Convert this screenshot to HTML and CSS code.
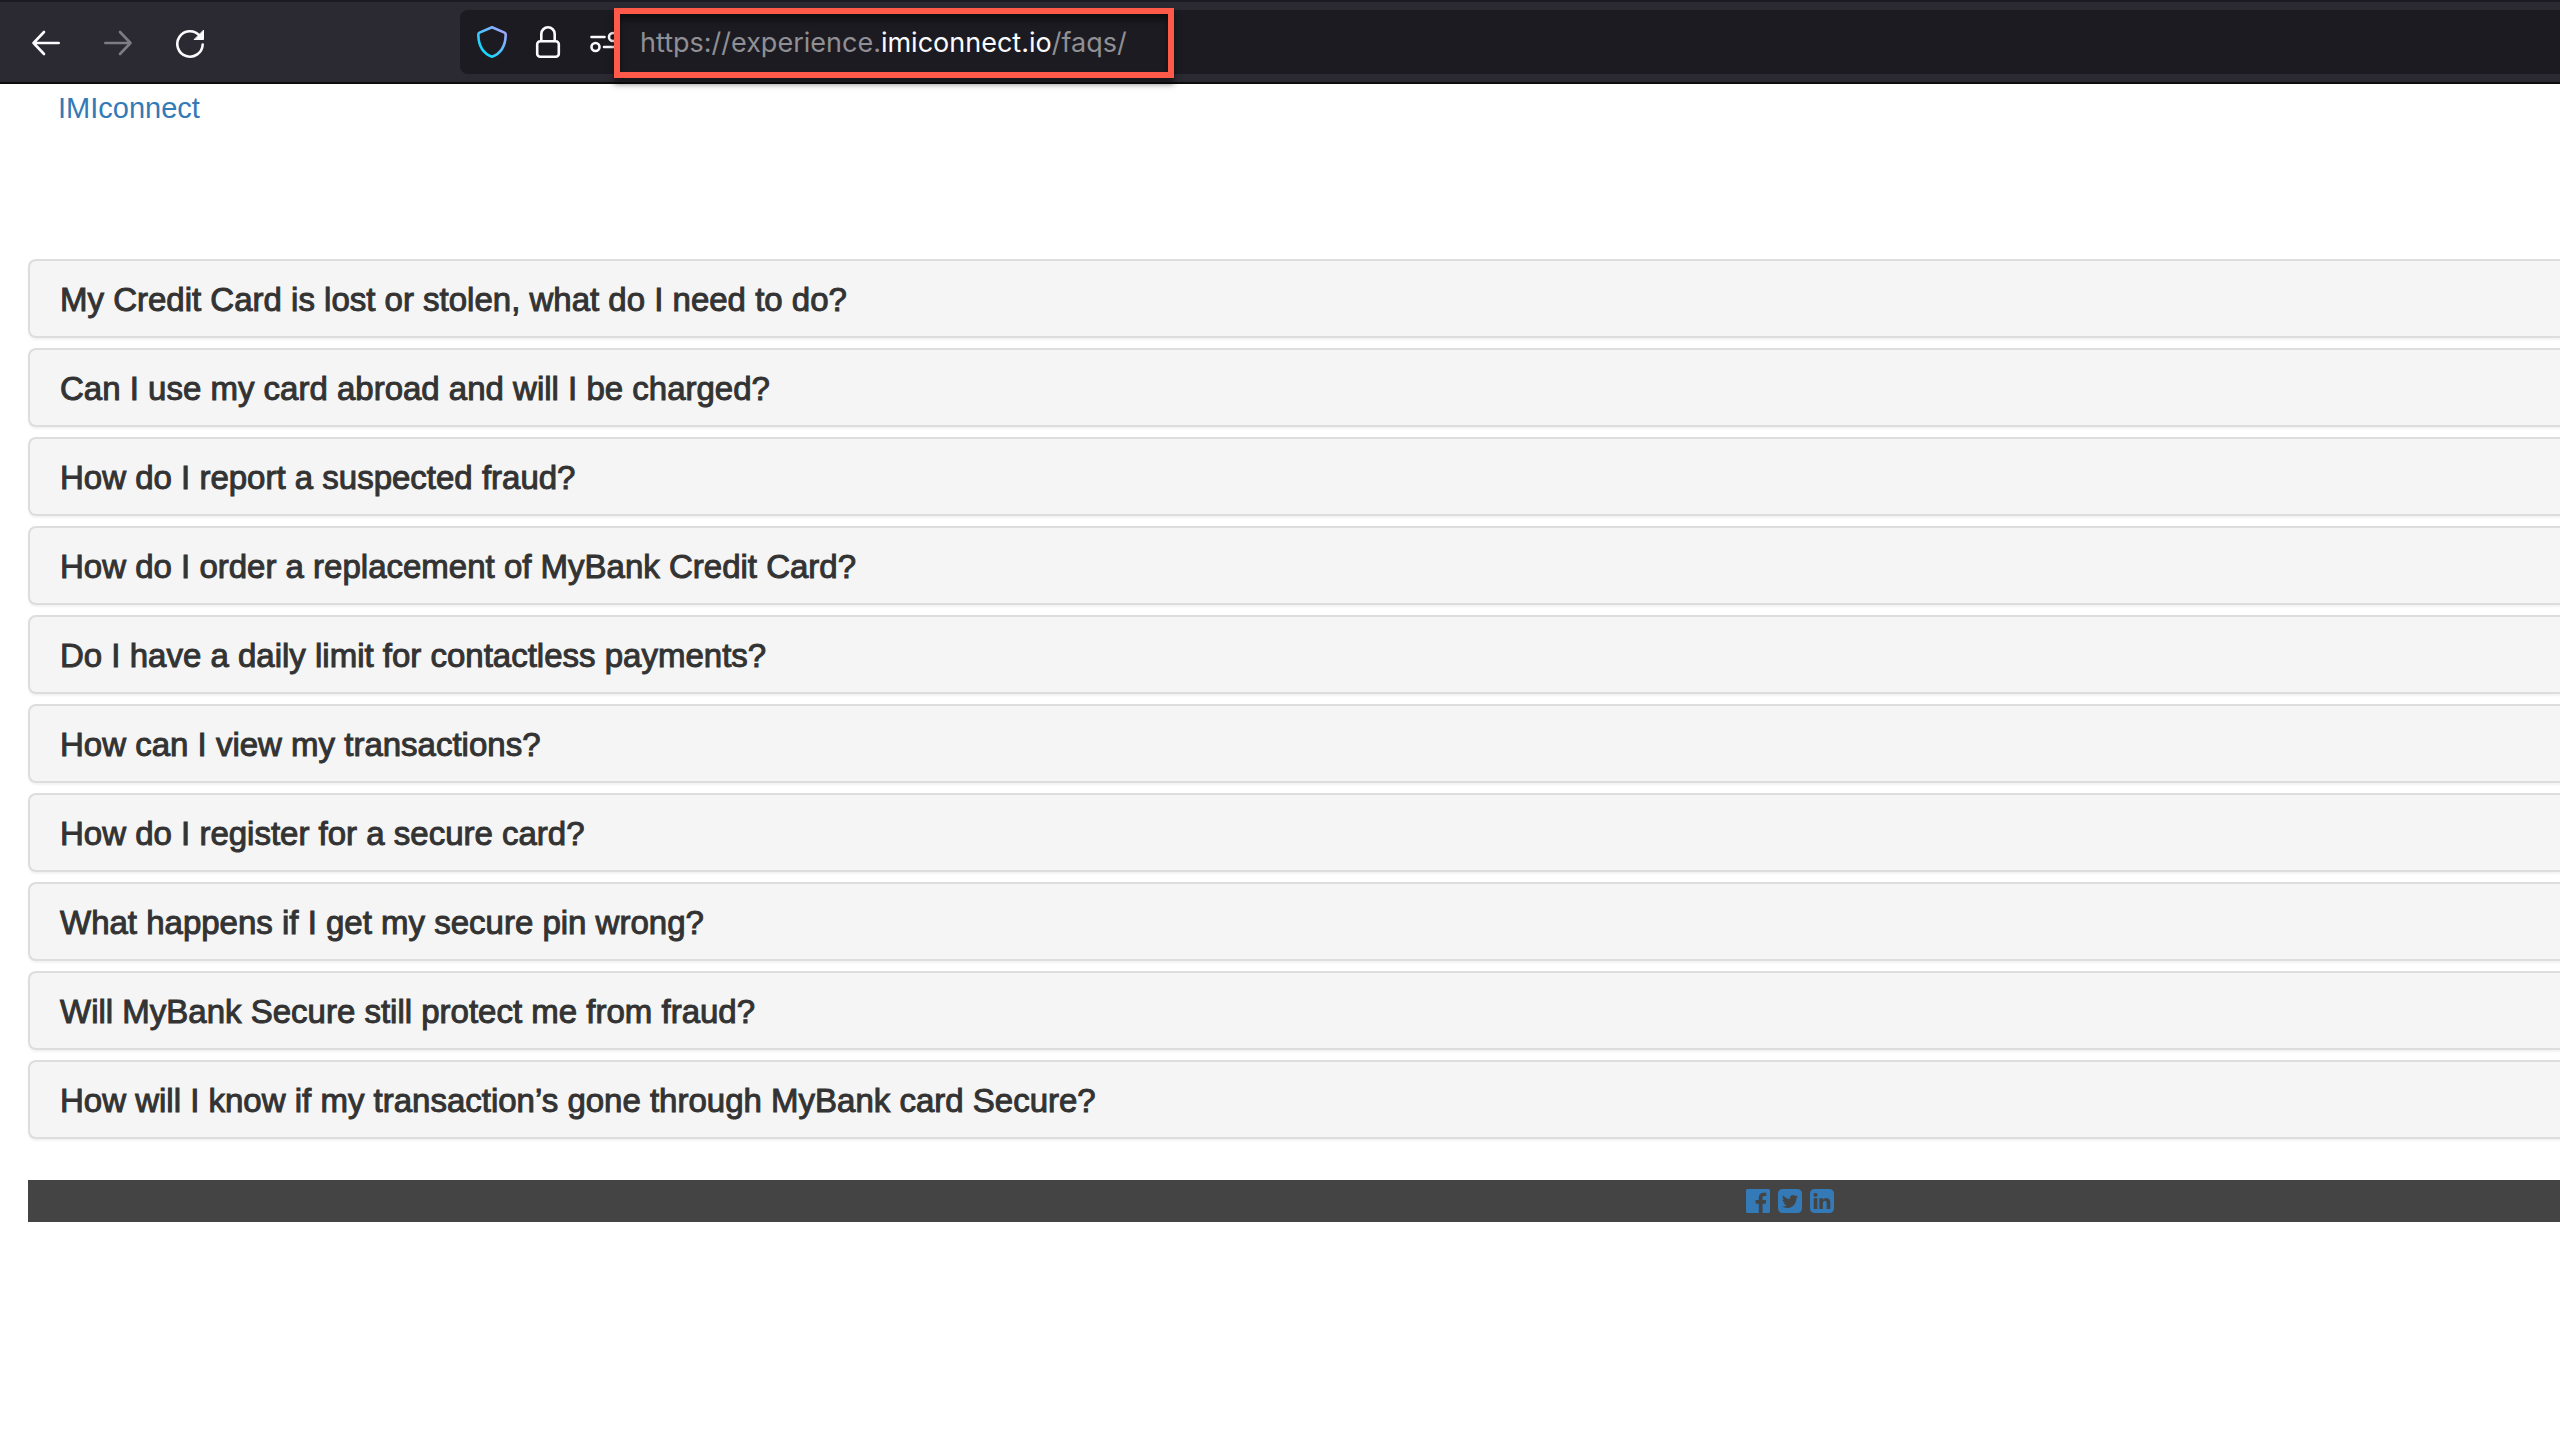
FILE: index.html
```html
<!DOCTYPE html>
<html lang="en">
<head>
<meta charset="utf-8">
<meta name="viewport" content="width=device-width, initial-scale=1">
<title>FAQs</title>
<link rel="stylesheet" href="styles.css">
</head>
<body>
<header class="toolbar">
  <nav class="nav-buttons" aria-label="Browser navigation">
    <button class="icon-button" type="button" aria-label="Back">
      <svg viewBox="0 0 32 32"><path d="M28.700 16H3.500M14 5L3.500 16L14 27"/></svg>
    </button>
    <button class="icon-button is-disabled" type="button" aria-label="Forward" disabled>
      <svg viewBox="0 0 32 32"><path d="M3.300 16h25.200M18 5l10.500 11L18 27"/></svg>
    </button>
    <button class="icon-button" type="button" aria-label="Reload">
      <svg viewBox="0 0 32 32"><path d="M25.500 8.500A12.700 12.700 0 1 0 28.700 17.500"/><path class="solid" d="M29.500 3.500v9h-9z"/></svg>
    </button>
  </nav>
  <div class="address-bar">
    <button class="bar-icon" type="button" aria-label="Tracking protection">
      <svg viewBox="0 0 32 36">
        <defs><linearGradient id="shield" x1="0" y1="1" x2="1" y2="0"><stop offset="0.200" stop-color="#16d5ff"/><stop offset="1" stop-color="#b3a0ff"/></linearGradient></defs>
        <path stroke="url(#shield)" d="M16 3.300L28.500 8.600Q29.700 9.200 29.700 10.800C29.500 21.500 25 29.500 16 32.800C7 29.500 2.500 21.500 2.300 10.800Q2.300 9.200 3.500 8.600Z"/>
      </svg>
    </button>
    <button class="bar-icon" type="button" aria-label="Connection security">
      <svg viewBox="0 0 32 36"><rect x="5.200" y="17.200" width="21.600" height="15.600" rx="3"/><path d="M9.300 17v-7a6.700 6.700 0 0 1 13.400 0V17"/></svg>
    </button>
    <button class="bar-icon" type="button" aria-label="Permissions">
      <svg viewBox="0 0 32 36"><path d="M3.500 13h13M16 23h14"/><circle cx="7.500" cy="23" r="4"/><circle cx="25" cy="13" r="4"/></svg>
    </button>
    <a class="url" href="#">https://experience.<span class="domain">imiconnect.io</span>/faqs/</a>
  </div>
</header>
<main class="page">
  <a class="brand" href="#">IMIconnect</a>
  <section class="questions" aria-label="Frequently asked questions">
    <button class="question" type="button">My Credit Card is lost or stolen, what do I need to do?</button>
    <button class="question" type="button">Can I use my card abroad and will I be charged?</button>
    <button class="question" type="button">How do I report a suspected fraud?</button>
    <button class="question" type="button">How do I order a replacement of MyBank Credit Card?</button>
    <button class="question" type="button">Do I have a daily limit for contactless payments?</button>
    <button class="question" type="button">How can I view my transactions?</button>
    <button class="question" type="button">How do I register for a secure card?</button>
    <button class="question" type="button">What happens if I get my secure pin wrong?</button>
    <button class="question" type="button">Will MyBank Secure still protect me from fraud?</button>
    <button class="question" type="button">How will I know if my transaction’s gone through MyBank card Secure?</button>
  </section>
  <footer class="social">
    <a href="#" aria-label="Facebook"><svg viewBox="0 0 1536 1536"><path d="M1451 0q35 0 60 25t25 60v1366q0 35-25 60t-60 25h-391V941h199l30-232h-229V561q0-56 23.500-84t91.500-28l122-1V241q-63-9-178-9-136 0-217.500 80T820 538v171H620v232h200v595H85q-35 0-60-25t-25-60V85q0-35 25-60T85 0h1366z"/></svg></a>
    <a href="#" aria-label="Twitter"><svg viewBox="0 0 1536 1536"><path d="M1280 482q-56 25-121 34 68-40 93-117-65 38-134 51-61-66-153-66-87 0-148.500 61.500T755 594q0 29 5 48-129-7-242-65T326 422q-29 50-29 106 0 114 91 175-47-1-100-26v2q0 75 50 133.500t123 72.500q-29 8-51 8-13 0-39-4 21 63 74.500 104t121.500 42q-116 90-261 90-26 0-50-3 148 94 322 94 112 0 210-35.500t168-95 120.500-137 75-162T1176 618q0-18-1-27 63-45 105-109zm256-194v960q0 119-84.500 203.500T1248 1536H288q-119 0-203.500-84.500T0 1248V288Q0 169 84.500 84.500T288 0h960q119 0 203.500 84.500T1536 288z"/></svg></a>
    <a href="#" aria-label="LinkedIn"><svg viewBox="0 0 1536 1536"><path d="M237 1286h231V592H237v694zm246-908q-1-52-36-86t-93-34-94.500 34-36.500 86q0 51 35.500 85.500T351 498h1q59 0 95-34.500t36-85.500zm585 908h231V888q0-154-73-233t-193-79q-136 0-209 117h2V592H595q3 66 0 694h231V898q0-38 7-56 15-35 45-59.500t74-24.500q116 0 116 157v371zm468-998v960q0 119-84.500 203.500T1248 1536H288q-119 0-203.500-84.500T0 1248V288Q0 169 84.500 84.500T288 0h960q119 0 203.500 84.500T1536 288z"/></svg></a>
  </footer>
</main>
</body>
</html>
```
FILE: styles.css
```css
* { box-sizing: border-box; }

body {
  margin: 0;
  background: #fff;
  color: #333;
  font-family: "Helvetica Neue", "Liberation Sans", Arial, sans-serif;
  overflow-x: hidden;
}

button {
  margin: 0;
  padding: 0;
  border: 0;
  background: none;
  font: inherit;
  color: inherit;
}

svg { display: block; }

/* Browser toolbar */
.toolbar {
  display: flex;
  align-items: center;
  height: 84px;
  border-top: 2px solid #1c1b22;
  border-bottom: 2px solid #0c0c0d;
  background: #2b2a33;
}

.nav-buttons {
  display: flex;
  flex: none;
  gap: 40px;
  width: 460px;
  padding: 2px 0 0 30px;
}

.icon-button {
  width: 32px;
  height: 32px;
  color: #fbfbfe;
}

.icon-button.is-disabled { color: #7d7c83; }

.icon-button svg,
.bar-icon svg {
  fill: none;
  stroke: currentColor;
  stroke-width: 2.6;
  stroke-linecap: round;
  stroke-linejoin: round;
}

.icon-button .solid {
  fill: currentColor;
  stroke-width: 1;
}

.address-bar {
  display: flex;
  flex: 1;
  align-items: center;
  gap: 24px;
  height: 64px;
  padding-left: 16px;
  border-radius: 8px 0 0 8px;
  background: #1c1b22;
}

.bar-icon {
  width: 32px;
  height: 36px;
  color: #fbfbfe;
}

.url {
  z-index: 1;
  width: 560px;
  height: 70px;
  margin: 2px 0 0 -30px;
  padding-left: 20px;
  border: 6px solid #ff5a49;
  background: #1c1b22;
  box-shadow: 0 6px 6px rgba(0, 0, 0, 0.5), inset 0 6px 6px rgba(0, 0, 0, 0.5);
  color: #8f8f94;
  font-family: Inter, sans-serif;
  font-size: 27px;
  line-height: 58px;
  text-decoration: none;
  white-space: nowrap;
}

.domain { color: #fbfbfe; }

/* Page */
.page { padding-left: 28px; }

.brand {
  display: block;
  width: max-content;
  margin: 4px 0 131px 30px;
  color: #337ab7;
  font-size: 29px;
  line-height: 40px;
  text-decoration: none;
}

.questions {
  display: flex;
  flex-direction: column;
  gap: 10px;
}

.question {
  padding: 21px 30px 19px;
  border: 2px solid #ddd;
  border-right: 0;
  border-radius: 8px 0 0 8px;
  background: #f5f5f5;
  box-shadow: 0 2px 2px rgba(0, 0, 0, 0.05);
  font-size: 33px;
  line-height: 35px;
  text-align: left;
  -webkit-text-stroke: 1px currentColor;
}

.social {
  display: flex;
  justify-content: center;
  gap: 8px;
  margin-top: 41px;
  padding: 9px 0 9px 992px;
  background: #444;
}

.social svg {
  width: 24px;
  height: 24px;
  fill: #337ab7;
}
```
